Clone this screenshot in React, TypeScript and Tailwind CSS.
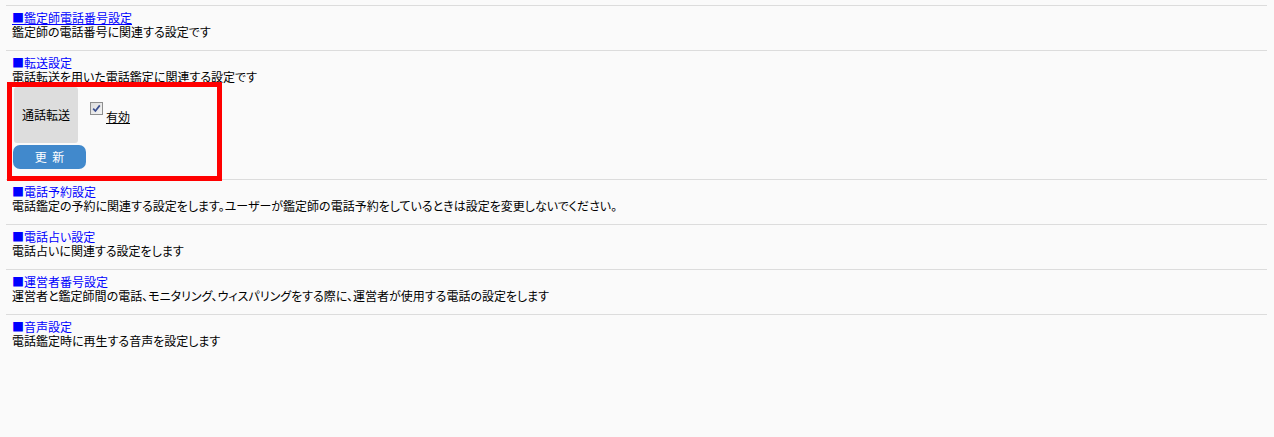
import React from "react";

const sections = [
  { title: "■鑑定師電話番号設定", desc: "鑑定師の電話番号に関連する設定です", underline: true },
  { title: "■転送設定", desc: "電話転送を用いた電話鑑定に関連する設定です", table: true },
  { title: "■電話予約設定", desc: "電話鑑定の予約に関連する設定をします。ユーザーが鑑定師の電話予約をしているときは設定を変更しないでください。" },
  { title: "■電話占い設定", desc: "電話占いに関連する設定をします" },
  { title: "■運営者番号設定", desc: "運営者と鑑定師間の電話、モニタリング、ウィスパリングをする際に、運営者が使用する電話の設定をします" },
  { title: "■音声設定", desc: "電話鑑定時に再生する音声を設定します" },
];

function Checkbox() {
  return (
    <span className="inline-flex h-[13px] w-[13px] shrink-0 items-center justify-center border border-[#8e8f8f] bg-gradient-to-br from-[#dcdcdc] to-[#f4f4f4]">
      <svg width="9" height="9" viewBox="0 0 9 9">
        <path d="M1.2 4.6 L3.4 7 L7.8 1.4" fill="none" stroke="#3b4f8f" strokeWidth="1.7" />
      </svg>
    </span>
  );
}

export default function App() {
  return (
    <div
      className="relative min-h-[437px] w-full bg-[#fafafa] pt-[5px] text-[12px] leading-[14px] text-black [font-feature-settings:'palt']"
      style={{ fontFamily: '"Noto Sans CJK JP", "Noto Sans", sans-serif' }}
    >
      <div className="ml-[6px] mr-[7px]">
        {sections.map((s, i) => (
          <div key={i} className={`border-t border-[#dcdcdc] pl-[6px] pt-[5px] ${s.table ? "pb-[10px]" : "pb-[11px]"}`}>
            <div className={`text-[#0000ff] ${s.underline ? "underline" : ""}`}>{s.title}</div>
            <div>{s.desc}</div>
            {s.table && (
              <div className="mt-[3px]">
                <div className="flex">
                  <div className="ml-[2px] flex h-[56px] w-[64px] items-center justify-center rounded-[3px] bg-[#dddddd]">
                    通話転送
                  </div>
                  <div className="ml-[12px] flex items-start pt-[15px]">
                    <Checkbox />
                    <span className="ml-[3px] mt-[8px] underline">有効</span>
                  </div>
                </div>
                <button className="mt-[2px] ml-[1px] flex h-[24px] w-[73px] items-center justify-center rounded-[7px] bg-[#4189cc] text-white">
                  更&nbsp;&nbsp;新
                </button>
              </div>
            )}
          </div>
        ))}
      </div>
      <div className="pointer-events-none absolute left-[7px] top-[82px] h-[99px] w-[215px] border-[5px] border-[#ff0000]" />
    </div>
  );
}
